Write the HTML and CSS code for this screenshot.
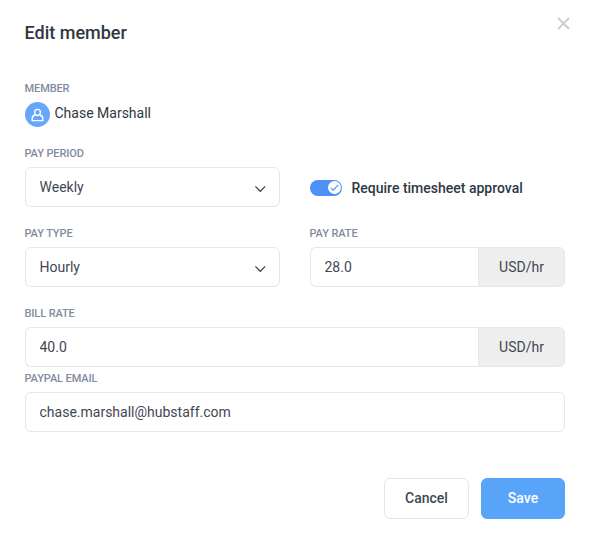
FILE: index.html
```html
<!DOCTYPE html>
<html lang="en">
<head>
<meta charset="UTF-8">
<title>Edit member</title>
<link rel="stylesheet" href="styles.css">
</head>
<body>

<form class="modal">
    <div class="modal-header">
        <h1 class="title">Edit member</h1>
        <button type="button" class="close" aria-label="Close">
            <svg width="13" height="13" viewBox="0 0 13 13">
                <path d="M1 1L12 12M12 1L1 12" />
            </svg>
        </button>
    </div>

    <!-- Member -->
    <div class="member-section">
        <div class="label">MEMBER</div>
        <div class="member">
            <span class="avatar">
                <svg width="13" height="14" viewBox="0 0 13 14">
                    <path d="M4.6 6.6C3.8 6 3.6 5.2 3.6 4.2C3.6 2.4 4.8 1.4 6.5 1.4S9.4 2.4 9.4 4.2C9.4 5.2 9.2 6 8.4 6.6C7.4 7.6 5.6 7.6 4.6 6.6Z" />
                    <path d="M4.2 7C2 7.5 1.2 8.6 1.2 10.4V12.6H11.8V10.4C11.8 8.6 11 7.5 8.8 7" />
                </svg>
            </span>
            <span class="member-name">Chase Marshall</span>
        </div>
    </div>

    <!-- Pay settings -->
    <div class="row">
        <div class="field">
            <label class="label" for="period">PAY PERIOD</label>
            <div class="select-container">
                <select id="period" class="control">
                    <option>Weekly</option>
                </select>
                <svg class="chevron" width="12" height="8" viewBox="0 0 12 8">
                    <path d="M1.4 1.4L6.3 6.3L11.2 1.4" />
                </svg>
            </div>
        </div>
        <div class="field toggle-field">
            <span class="toggle">
                <span class="knob">
                    <svg width="13" height="13" viewBox="0 0 13 13">
                        <path d="M2.8 6.9L5.2 9.2L10.2 3.8" />
                    </svg>
                </span>
            </span>
            <span class="toggle-text">Require timesheet approval</span>
        </div>
    </div>

    <div class="row">
        <div class="field">
            <label class="label" for="type">PAY TYPE</label>
            <div class="select-container">
                <select id="type" class="control">
                    <option>Hourly</option>
                </select>
                <svg class="chevron" width="12" height="8" viewBox="0 0 12 8">
                    <path d="M1.4 1.4L6.3 6.3L11.2 1.4" />
                </svg>
            </div>
        </div>
        <div class="field">
            <label class="label" for="pay">PAY RATE</label>
            <div class="input-group">
                <input id="pay" class="control" type="text" value="28.0">
                <span class="unit">USD/hr</span>
            </div>
        </div>
    </div>

    <div class="field bill-field">
        <label class="label" for="bill">BILL RATE</label>
        <div class="input-group">
            <input id="bill" class="control" type="text" value="40.0">
            <span class="unit">USD/hr</span>
        </div>
    </div>

    <div class="field">
        <label class="label" for="email">PAYPAL EMAIL</label>
        <input id="email" class="control" type="text" value="chase.marshall@hubstaff.com">
    </div>

    <div class="actions">
        <button type="button" class="btn btn-cancel">Cancel</button>
        <button type="button" class="btn btn-save">Save</button>
    </div>
</form>

</body>
</html>
```
FILE: styles.css
```css
* {
    box-sizing: border-box;
}

body {
    margin: 0;
    background: #fff;
    color: #2f3844;
    font-family: Roboto, sans-serif;
    font-size: 14px;
}

.modal {
    padding: 17px 23px 0 25px;
}

.modal-header {
    display: flex;
    justify-content: space-between;
    height: 64px;
}

.title {
    margin: 4px 0 0 -0.5px;
    font-size: 18px;
    font-weight: 500;
    line-height: 24px;
}

.close {
    width: 13px;
    height: 13px;
    padding: 0;
    border: 0;
    background: none;
}

.close svg {
    display: block;
    fill: none;
    stroke: #ccc;
    stroke-width: 1.8;
}

.label {
    display: block;
    height: 15px;
    margin: 0 0 6px -0.5px;
    padding-top: 1px;
    color: #7f8b9e;
    font-size: 11px;
    font-weight: 500;
    letter-spacing: -0.1px;
    line-height: 14px;
}

.member-section {
    margin-bottom: 19px;
}

.member {
    display: flex;
    align-items: center;
    gap: 4.5px;
    height: 25px;
    letter-spacing: 0;
}

.member-name {
    line-height: 22px;
    margin-bottom: 3px;
}

.avatar {
    display: flex;
    align-items: center;
    justify-content: center;
    width: 25px;
    height: 25px;
    border-radius: 50%;
    background: #67a7fa;
}

.avatar svg {
    fill: none;
    stroke: #fff;
    stroke-width: 1.4;
}

.row {
    display: grid;
    grid-template-columns: 255px 255px;
    gap: 30px;
    margin-bottom: 19px;
}

.field {
    width: 100%;
    max-width: 540px;
}

.control {
    display: block;
    width: 100%;
    height: 40px;
    padding: 0 13.5px;
    border: 1px solid #e4e6ef;
    border-radius: 6px;
    background: #fff;
    color: #3f4753;
    font: inherit;
    letter-spacing: 0;
    appearance: none;
    outline: none;
}

.select-container {
    position: relative;
}

/* Arrow drawn over the native select */
.chevron {
    position: absolute;
    right: 14px;
    top: 18px;
    fill: none;
    stroke: #3f4753;
    stroke-width: 1.3;
    pointer-events: none;
}

.toggle-field {
    display: flex;
    align-items: center;
    gap: 9.5px;
    padding-top: 22px;
}

.toggle {
    display: flex;
    align-items: center;
    justify-content: flex-end;
    width: 32px;
    height: 16px;
    padding: 0 1.5px;
    border-radius: 8px;
    background: #4b91f7;
}

.knob {
    width: 13px;
    height: 13px;
    border-radius: 50%;
    background: #fff;
}

.knob svg {
    display: block;
    fill: none;
    stroke: #4b91f7;
    stroke-width: 1.1;
}

.toggle-text {
    font-weight: 500;
}

.input-group {
    display: flex;
}

.input-group .control {
    flex: 1;
    min-width: 0;
    border-right: 0;
    border-radius: 6px 0 0 6px;
}

.unit {
    display: flex;
    align-items: center;
    justify-content: center;
    width: 87px;
    height: 40px;
    border: 1px solid #e4e6ef;
    border-radius: 0 6px 6px 0;
    background: #eee;
    color: #3f4753;
}

.bill-field {
    margin-bottom: 4px;
}

.actions {
    display: flex;
    justify-content: flex-end;
    gap: 12px;
    max-width: 540px;
    margin-top: 46px;
}

.btn {
    height: 41px;
    padding: 0 0 1px;
    border: 1px solid #e4e6ef;
    border-radius: 6px;
    font: inherit;
    font-weight: 500;
}

.btn-cancel {
    width: 85px;
    background: #fff;
    color: #3f4753;
}

.btn-save {
    width: 84px;
    border-color: #58a4f9;
    background: #58a4f9;
    color: #fff;
}
```
